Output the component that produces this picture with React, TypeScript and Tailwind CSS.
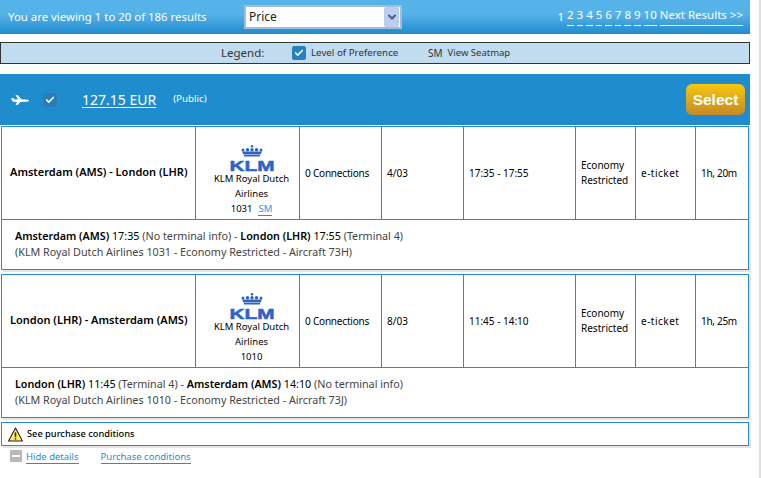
import { Check, ChevronDown } from 'lucide-react'

const font = "font-['Tahoma','Noto_Sans',sans-serif]"

type Flight = {
  route: string
  number: string
  seatmap: boolean
  date: string
  time: string
  duration: string
  from: string
  fromTime: string
  fromTerminal: string
  to: string
  toTime: string
  toTerminal: string
  aircraft: string
}

const flights: Flight[] = [
  {
    route: 'Amsterdam (AMS) - London (LHR)',
    number: '1031',
    seatmap: true,
    date: '4/03',
    time: '17:35 - 17:55',
    duration: '1h, 20m',
    from: 'Amsterdam (AMS)',
    fromTime: '17:35',
    fromTerminal: '(No terminal info)',
    to: 'London (LHR)',
    toTime: '17:55',
    toTerminal: '(Terminal 4)',
    aircraft: '73H',
  },
  {
    route: 'London (LHR) - Amsterdam (AMS)',
    number: '1010',
    seatmap: false,
    date: '8/03',
    time: '11:45 - 14:10',
    duration: '1h, 25m',
    from: 'London (LHR)',
    fromTime: '11:45',
    fromTerminal: '(Terminal 4)',
    to: 'Amsterdam (AMS)',
    toTime: '14:10',
    toTerminal: '(No terminal info)',
    aircraft: '73J',
  },
]

function CheckBadge({ className }: { className: string }) {
  return (
    <span className={`flex items-center justify-center rounded-[2px] ${className}`}>
      <Check className="h-[10px] w-[10px] text-white" strokeWidth={4} />
    </span>
  )
}

function KlmLogo() {
  return (
    <svg className="overflow-visible" width="46" height="26" viewBox="0 0 46 26" fill="#2d63c8">
      <circle cx="23" cy="1.300" r="1.300" />
      <circle cx="14" cy="5" r="1.500" />
      <circle cx="18.500" cy="4.700" r="1.700" />
      <circle cx="23" cy="4.700" r="1.700" />
      <circle cx="27.500" cy="4.700" r="1.700" />
      <circle cx="32" cy="5" r="1.500" />
      <path d="M13 6.500h20l-1.500 3h-17z" />
      <rect x="15" y="10" width="16" height="1.500" />
      <text
        x="0.500"
        y="25.500"
        fontFamily="Liberation Sans"
        fontSize="15"
        fontWeight="900"
        stroke="#2d63c8"
        strokeWidth="0.5"
        textLength="45"
        lengthAdjust="spacingAndGlyphs"
      >
        KLM
      </text>
    </svg>
  )
}

function FlightTable({ flight }: { flight: Flight }) {
  const cell = 'flex items-center border-l border-[#2a8dcb] pl-[5px] text-[10px] text-black'
  return (
    <div className="ml-[1px] w-[748px] border border-[#2a8dcb] bg-white shadow-[2px_2px_0_#e4e4e4]">
      <div className="grid h-[93px] grid-cols-[193px_104px_82px_82px_112px_60px_60px_53px] border-b border-[#2a8dcb]">
        <div className="flex items-center pl-[8px] pb-[2px] text-[11px] font-semibold text-black">{flight.route}</div>
        <div className="flex flex-col items-center border-l border-[#2a8dcb] pl-[8px] pt-[18px] text-[9.500px] leading-[15px] text-black">
          <KlmLogo />
          <span className="w-[80px] text-center">KLM Royal Dutch Airlines</span>
          <span>
            {flight.number}
            {flight.seatmap ? (
              <a className="ml-[6px] border-b border-[#2a8dcb] text-[#2f9ade]">SM</a>
            ) : null}
          </span>
        </div>
        <div className={`${cell} text-[9.500px] tracking-[-0.2px]`}>0 Connections</div>
        <div className={cell}>{flight.date}</div>
        <div className={cell}>{flight.time}</div>
        <div className={`${cell} leading-[15px]`}>
          Economy
          <br />
          Restricted
        </div>
        <div className={`${cell} tracking-[0.5px]`}>e-ticket</div>
        <div className={`${cell} tracking-[-0.3px]`}>{flight.duration}</div>
      </div>
      <div className="h-[49px] pl-[13px] pt-[8px] text-[10.750px] leading-[16px] text-[#444]">
        <p>
          <b className="font-semibold text-black">{flight.from}</b>{' '}
          <span className="text-black">{flight.fromTime}</span> {flight.fromTerminal} -{' '}
          <b className="font-semibold text-black">{flight.to}</b>{' '}
          <span className="text-black">{flight.toTime}</span> {flight.toTerminal}
        </p>
        <p>
          (KLM Royal Dutch Airlines {flight.number} - Economy Restricted - Aircraft {flight.aircraft})
        </p>
      </div>
    </div>
  )
}

export default function App() {
  return (
    <div className={`h-[478px] w-[761px] overflow-hidden border-r-2 border-[#dedede] bg-white ${font}`}>
      <div className="flex h-[34px] w-[750px] items-center bg-gradient-to-b from-[#56b3e9] from-40% to-[#1c8ccd] pl-[8px] pr-[7px] text-[11.400px] text-white">
        <span className="w-[236px]">You are viewing 1 to 20 of 186 results</span>
        <div className="flex h-[24px] w-[158px] items-center justify-between border-2 border-[#a5bcd8] bg-white pl-[3px] pr-[1px] text-[12px] text-[#222]">
          Price
          <span className="flex h-[20px] w-[15px] items-center justify-center rounded-[2px] bg-[#bccdf2]">
            <ChevronDown className="h-[12px] w-[12px] text-[#4a5a8a]" strokeWidth={4} />
          </span>
        </div>
        <div className="ml-auto flex gap-[2px] text-[11.500px]">
          <span>1</span>
          {['2', '3', '4', '5', '6', '7', '8', '9', '10', 'Next Results >>'].map((page) => (
            <a key={page} className="ml-[1px] border-b border-white leading-[14px]">
              {page}
            </a>
          ))}
        </div>
      </div>

      <div className="mt-[8px] flex h-[22px] w-[750px] items-center border border-[#333] bg-[#c0dcee] pl-[220px] text-[#333]">
        <span className="w-[71px] text-[11.500px]">Legend:</span>
        <CheckBadge className="h-[14px] w-[14px] bg-[#2583c0]" />
        <span className="ml-[5px] w-[117px] text-[9.750px]">Level of Preference</span>
        <span className="text-[10px]">SM</span>
        <span className="ml-[5px] text-[9.500px]">View Seatmap</span>
      </div>

      <div className="mt-[10px] flex h-[51px] w-[750px] items-center bg-[#1e8ccd] pl-[11px] pr-[5px] text-white">
        <svg width="18" height="10" viewBox="0 0 18 10" fill="white">
          <path d="M0 3.500 2 3l2 1.500 3-.2L4.500 0h2l4 4.200 5 .3c1.500.2 2.500.6 2.500 1.200 0 .8-2 1-3.500 1l-5 .2-3 3h-2l1.500-3-4.500-.5z" />
        </svg>
        <CheckBadge className="ml-[14px] h-[14px] w-[14px] bg-[#2b7db8]" />
        <a className="ml-[25px] border-b border-white text-[14px] leading-[15px]">127.15 EUR</a>
        <span className="ml-[17px] text-[9.750px]">(Public)</span>
        <button className="ml-auto h-[31px] w-[59px] rounded-[6px] bg-gradient-to-b from-[#f8c708] to-[#c48a24] font-['Liberation_Sans',sans-serif] text-[15.500px] font-bold text-white">
          Select
        </button>
      </div>

      <div className="mt-[1px] flex flex-col gap-[4px]">
        {flights.map((flight) => (
          <FlightTable key={flight.number} flight={flight} />
        ))}
      </div>

      <div className="ml-[1px] mt-[4px] flex h-[24px] w-[748px] items-center gap-[4px] border border-[#2a8dcb] pl-[6px] text-[9.250px] font-medium text-black shadow-[2px_2px_0_#e4e4e4]">
        <svg width="15" height="15" viewBox="0 0 14 14">
          <path d="M7 1 13.500 13H.5z" fill="#ffee58" stroke="#222" strokeWidth="1" strokeLinejoin="round" />
          <rect x="6.300" y="5" width="1.400" height="4.500" fill="#222" />
          <rect x="6.300" y="10.300" width="1.400" height="1.400" fill="#222" />
        </svg>
        See purchase conditions
      </div>

      <div className="mt-[4px] flex items-start pl-[10px] text-[9.500px] text-[#2a8dcb]">
        <span className="flex h-[12px] w-[12px] items-center justify-center bg-[#b9b9b9]">
          <span className="h-[2px] w-[8px] bg-white" />
        </span>
        <a className="ml-[4px] mt-[1px] border-b border-[#2a8dcb] leading-[12px]">Hide details</a>
        <a className="ml-[22px] mt-[1px] border-b border-[#2a8dcb] leading-[12px]">Purchase conditions</a>
      </div>
    </div>
  )
}
